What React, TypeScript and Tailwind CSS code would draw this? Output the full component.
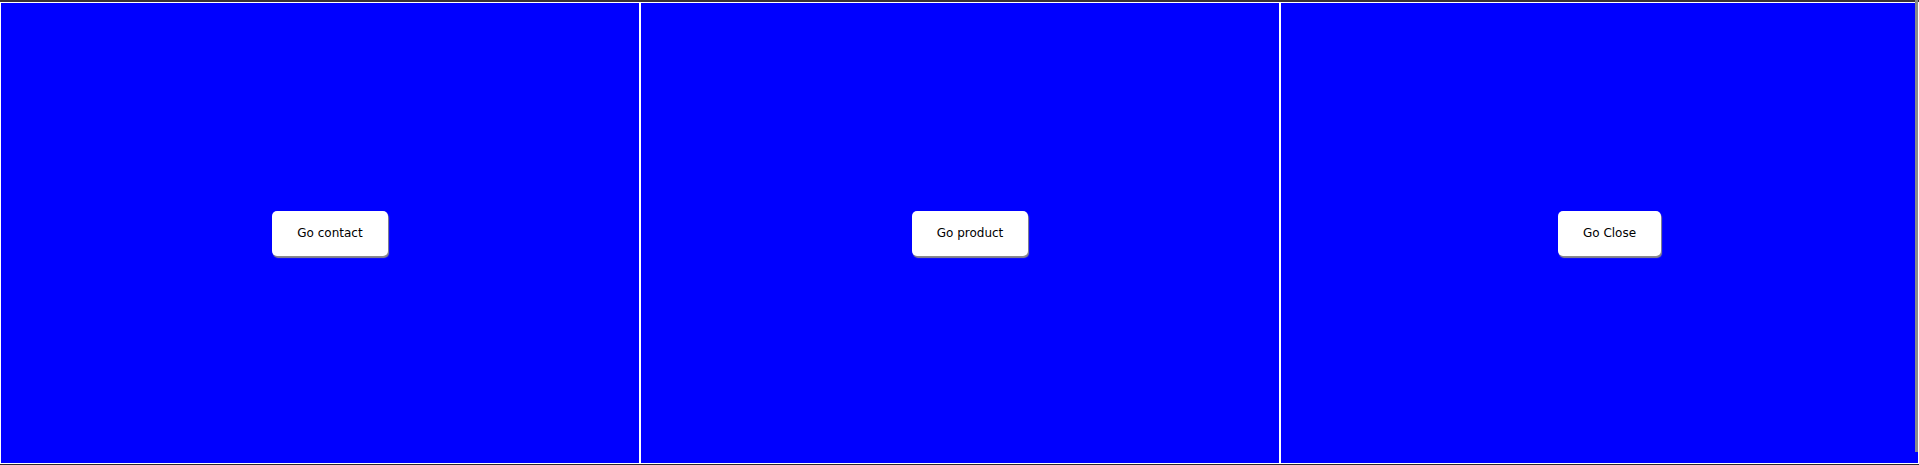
import React from 'react';

const panels = ['Go contact', 'Go product', 'Go Close'];

const App = () => {
  return (
    <div className="relative w-[1919px] h-[465px] bg-white flex flex-col overflow-hidden">
      <div className="h-[2px] bg-[#3a3336]" />
      <div className="flex-1 flex gap-[2px] px-px py-px">
        {panels.map((label, i) => (
          <div
            key={label}
            className={
              (i === 2 ? 'flex-1' : 'w-[638px]') +
              ' bg-[#0000ff] flex items-center justify-center pl-[20px]'
            }
          >
            <button
              type="button"
              className="h-[45px] px-[25px] bg-white rounded-[5px] text-[12px] text-black shadow-[1px_2px_1px_#8a8a8a]"
              style={{ fontFamily: '"DejaVu Sans", Verdana, sans-serif' }}
            >
              {label}
            </button>
          </div>
        ))}
      </div>
      <div className="h-px bg-[#2b2b2b]" />
      <div className="absolute top-0 right-[1px] w-[3px] h-[452px] bg-[#8a8a8a]" />
    </div>
  );
};

export default App;
